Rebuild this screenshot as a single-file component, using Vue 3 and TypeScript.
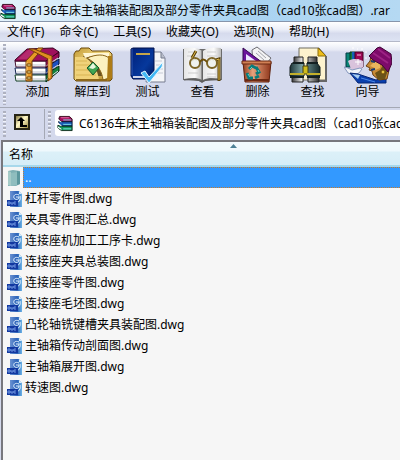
<script setup lang="ts">
import { ref } from 'vue'

interface MenuItem {
  label: string
}
interface Tool {
  id: string
  label: string
}

const archive = 'C6136车床主轴箱装配图及部分零件夹具cad图（cad10张cad图）.rar'
const address = ref<string>(archive)

const menus: MenuItem[] = [
  { label: '文件(F)' },
  { label: '命令(C)' },
  { label: '工具(S)' },
  { label: '收藏夹(O)' },
  { label: '选项(N)' },
  { label: '帮助(H)' },
]

const tools: Tool[] = [
  { id: 'add', label: '添加' },
  { id: 'extract', label: '解压到' },
  { id: 'test', label: '测试' },
  { id: 'view', label: '查看' },
  { id: 'delete', label: '删除' },
  { id: 'find', label: '查找' },
  { id: 'wizard', label: '向导' },
]

const files: string[] = [
  '杠杆零件图.dwg',
  '夹具零件图汇总.dwg',
  '连接座机加工工序卡.dwg',
  '连接座夹具总装图.dwg',
  '连接座零件图.dwg',
  '连接座毛坯图.dwg',
  '凸轮轴铣键槽夹具装配图.dwg',
  '主轴箱传动剖面图.dwg',
  '主轴箱展开图.dwg',
  '转速图.dwg',
]
</script>

<template>
  <div class="window">
    <svg class="defs" width="0" height="0" aria-hidden="true">
      <defs>
        <linearGradient id="g-folder" x1="0" y1="0" x2="1" y2="1">
          <stop offset="0" stop-color="#c39a35" />
          <stop offset=".5" stop-color="#f4dc86" />
          <stop offset="1" stop-color="#a87813" />
        </linearGradient>
        <linearGradient id="g-blue" x1="0" y1="0" x2="1" y2="1">
          <stop offset="0" stop-color="#001f78" />
          <stop offset=".6" stop-color="#06389c" />
          <stop offset="1" stop-color="#00175e" />
        </linearGradient>
        <linearGradient id="g-bin" x1="0" y1="0" x2="1" y2="0">
          <stop offset="0" stop-color="#8f3d1d" />
          <stop offset=".35" stop-color="#e8a27c" />
          <stop offset="1" stop-color="#8e351a" />
        </linearGradient>
        <linearGradient id="g-metal" x1="0" y1="0" x2="1" y2="0">
          <stop offset="0" stop-color="#3a3a3a" />
          <stop offset=".4" stop-color="#fff" />
          <stop offset="1" stop-color="#303030" />
        </linearGradient>
        <linearGradient id="g-teal" x1="0" y1="0" x2="1" y2="0">
          <stop offset="0" stop-color="#1d3538" />
          <stop offset=".4" stop-color="#7ba0a0" />
          <stop offset="1" stop-color="#152a2c" />
        </linearGradient>
        <linearGradient id="g-page" x1="0" y1="0" x2="1" y2="0">
          <stop offset="0" stop-color="#e6e6e6" />
          <stop offset=".6" stop-color="#fafafa" />
          <stop offset="1" stop-color="#bcbcbc" />
        </linearGradient>
        <linearGradient id="g-doc" x1="0" y1="0" x2="1" y2="0">
          <stop offset="0" stop-color="#6c93d2" />
          <stop offset=".6" stop-color="#2b62b8" />
          <stop offset="1" stop-color="#6db4e6" />
        </linearGradient>
        <symbol id="books" viewBox="0 0 18 18">
          <path d="M3 1h11l3 3v3H5L2 4z" fill="#a30d5c" stroke="#26000f" />
          <path d="M4 2h9l1 1H5z" fill="#e06aa5" />
          <path d="M5 7h12v5H5L2 9V6z" fill="#1a5eb8" stroke="#07162e" />
          <path d="M5 12h12v5H5l-4-3v-3z" fill="#10955a" stroke="#03200f" />
          <path d="M1 4l4 3v1L1 6zM1 8l4 3v1l-4-2zM1 12l4 3v1l-4-2z" fill="#fff" />
          <path d="M7 5h9M7 10h9M7 15h9" stroke="#7fe3ec" />
        </symbol>
      </defs>
    </svg>

    <header class="titlebar">
      <svg class="book-icon" viewBox="0 0 18 18" aria-hidden="true"><use href="#books" /></svg>
      <h1>{{ archive }}</h1>
    </header>

    <nav class="menubar">
      <button v-for="m in menus" :key="m.label" type="button">{{ m.label }}</button>
    </nav>

    <div class="toolbar">
      <span class="grip"></span>
      <button v-for="t in tools" :key="t.id" type="button" class="tool">
        <svg v-if="t.id === 'add'" viewBox="0 0 48 38" aria-hidden="true">
          <path d="M31 29L45 20V25L32 36z" fill="#14813b" stroke="#052e12" />
          <path d="M31 22L45 13V18L32 29z" fill="#1b4fc0" stroke="#05153f" />
          <path d="M31 15L45 6V11L32 22z" fill="#9c0a56" stroke="#2d0018" />
          <path d="M32 20L44 12M32 27L44 19M32 34L44 25" stroke="#dfe6f4" />
          <path d="M1 15h31v6H2z" fill="#fff" stroke="#44102e" />
          <path d="M1 22h31v6H2z" fill="#fff" stroke="#10204e" />
          <path d="M1 29h31v6H2z" fill="#fff" stroke="#113d22" />
          <path d="M3 19h28M3 26h28M3 33h28" stroke="#bfc1cd" />
          <path d="M1 14L13 3L39 2L45 6L32 15H1z" fill="#9f105b" stroke="#3b0020" />
          <path d="M4 13L14 4L24 3L13 13z" fill="#b52a6e" />
          <path d="M12 15L24 2h5L18 15v20h-6z" fill="#e79a27" stroke="#76400a" />
          <path d="M15 3h5L38 10v22l-4 3V13z" fill="#e08e20" stroke="#76400a" />
          <path d="M13 16v18M35 13v19" stroke="#ffd176" />
          <path d="M13 18h4v2h-4zM13 25h4v2h-4zM13 31h4v2h-4z" fill="#fff2a0" stroke="#70430b" />
        </svg>
        <svg v-else-if="t.id === 'extract'" viewBox="0 0 48 38" aria-hidden="true">
          <path d="M5 8l2-3h3l2-3h8l3 3h17l3 3v25l-2 2H7l-2-2z" fill="url(#g-folder)" stroke="#6c4b0b" />
          <path d="M14 10h25v20H27z" fill="#6b5120" />
          <path d="M14 7h26v5l-9-3-8 1-7 2z" fill="#fff6d4" />
          <path d="M6 11h9c7 3 14 13 15 23H8l-2-1z" fill="#f0d27a" />
          <path d="M7 15h11M7 19h15M7 24h18M7 29h20" stroke="#d8b452" />
          <path d="M18 12c10-4 17-4 22 0v20l-6 2c-1-10-7-17-16-22z" fill="#fcf1bf" stroke="#8a651b" />
          <path d="M39 10h4v22l-5 3z" fill="#ae7c17" />
          <path d="M24 16l6 6-6 7-6-7z" fill="#3fa552" stroke="#17572a" />
          <path d="M24 17l3 4-3 2-4-1z" fill="#e9f7df" />
          <path d="M7 34h31" stroke="#8d6719" stroke-width="2" />
        </svg>
        <svg v-else-if="t.id === 'test'" viewBox="0 0 48 38" aria-hidden="true">
          <path d="M26 6h11l4 6v24H22z" fill="#f4f5f8" stroke="#777d8f" />
          <path d="M37 6v6h4" fill="#b9becb" stroke="#777d8f" />
          <path d="M31 15h7M32 19h7M32 23h7M32 27h7" stroke="#c6cad5" />
          <path d="M7 3l2-1h21v28l-3 3H9l-2-3z" fill="url(#g-blue)" stroke="#00104a" />
          <path d="M9 31h19l2-2" fill="none" stroke="#cdd6ed" stroke-width="2" />
          <path d="M12 8h14" stroke="#c4a54a" stroke-width="2" />
          <path d="M8 3v26" stroke="#3159b3" />
          <path d="M17 27l4-2 4 6L39 16l-1 5L25 37z" fill="#44b8f4" stroke="#e8f8ff" />
        </svg>
        <svg v-else-if="t.id === 'view'" viewBox="0 0 48 38" aria-hidden="true">
          <path d="M4 3h39v31l-17 1-3 2-3-2-16-1z" fill="#6c6c6c" />
          <path d="M5 2c6-1 14-1 18 3v29c-5-3-12-2-18-1z" fill="url(#g-page)" />
          <path d="M42 2c-6-1-14-1-18 3v29c5-3 12-2 18-1z" fill="url(#g-page)" />
          <path d="M23 5v31M5 34c7-1 13-1 18 2c5-3 11-3 18-2" fill="none" stroke="#5c5c5c" />
          <path d="M9 6h9M8 10h11M9 27h10M28 6h9M28 10h10M28 28h9M28 31h9" stroke="#ccc" />
          <path d="M13 12l4-7M37 14l3-1v22" fill="none" stroke="#574008" stroke-width="3" />
          <path d="M13 12l4-7M37 14l3-1v21" fill="none" stroke="#dfb94b" />
          <circle cx="16" cy="17" r="5" fill="#eff1ed" stroke="#7c6425" stroke-width="2" />
          <circle cx="33" cy="17" r="5" fill="#eff1ed" stroke="#7c6425" stroke-width="2" />
          <path d="M21 16q3-5 7 0" fill="none" stroke="#6c4e0a" stroke-width="2" />
          <path d="M13 15q2-3 5-1M30 15q2-3 5-1" fill="none" stroke="#d8d6c2" />
        </svg>
        <svg v-else-if="t.id === 'delete'" viewBox="0 0 48 38" aria-hidden="true">
          <path d="M18 4l5-3 14 11-4 5H19z" fill="#f3f3f4" stroke="#6d6d73" />
          <path d="M24 5l8 7M26 3l8 7M22 7l8 7" stroke="#a4a4ac" />
          <path d="M9 2l20 15H9z" fill="#6b159c" stroke="#35094e" />
          <path d="M12 8l10 7H12z" fill="#eee8ff" />
          <path d="M9 16h28l-2 20H11z" fill="url(#g-bin)" stroke="#5e210d" />
          <path d="M8 15h29v3H8z" fill="#d18054" stroke="#6b2910" />
          <path d="M11 34h24" stroke="#6c2812" stroke-width="2" />
          <path d="M15 23l3-3 4 2M22 21l3 5-3 2M19 32h-4l-2-5M21 32l4-2" fill="none" stroke="#087b7b" stroke-width="3" />
          <path d="M16 23l2-2M24 24l1 2M14 28l2 3" stroke="#65d4c5" />
        </svg>
        <svg v-else-if="t.id === 'find'" viewBox="0 0 48 38" aria-hidden="true">
          <path d="M10 2h20l7 8v24H10z" fill="#fdf3ce" stroke="#716e62" />
          <path d="M29 2v8h8z" fill="#eebd19" stroke="#8c6e0b" />
          <path d="M37 10v25H22" fill="none" stroke="#676767" stroke-width="2" />
          <path d="M5 11h9v7H5zM19 11h9v7h-9z" fill="url(#g-metal)" stroke="#222" />
          <path d="M3 30h11v6H3zM19 30h11v6H19z" fill="url(#g-metal)" stroke="#222" />
          <path d="M3 17h12v13H1V21zM18 17h10l3 4v9H18z" fill="url(#g-teal)" stroke="#101a1b" />
          <path d="M14 20h5v8h-5z" fill="#d0bd1c" stroke="#48410a" />
          <path d="M1 28h14M18 28h13" stroke="#c3b02b" stroke-width="2" />
          <path d="M1 31h14M18 31h13M4 17h11M18 17h11" stroke="#142021" stroke-width="2" />
        </svg>
        <svg v-else viewBox="0 0 48 38" aria-hidden="true">
          <path d="M2 7h5v14H2z" fill="#078575" stroke="#033b44" />
          <path d="M6 6h5v14H6z" fill="#157a3c" stroke="#06361e" />
          <path d="M8 6h3v14H8z" fill="#1263b6" />
          <path d="M11 6h8v15h-8z" fill="#9b0954" stroke="#42001e" />
          <path d="M13 9h4" stroke="#f5c0dc" />
          <path d="M4 15c5-3 11-2 15 0v6l-4 2H7z" fill="#d9c3dc" />
          <path d="M14 13v6M11 16h6" stroke="#fff" />
          <path d="M0 21l4 1 4 2 8-2 2 1-3 4-6 2-5-2z" fill="#f0f3f8" stroke="#8597bd" />
          <path d="M6 27l8 1 9 3 9 3 10-3v6H14z" fill="#0a3fae" stroke="#062672" />
          <path d="M8 28l8 1-2 4z" fill="#a8cdf0" />
          <path d="M17 32l14 4" stroke="#4d8be8" />
          <path d="M27 10l-1 5-4 5 4 2-1 2 3 1 1 4 6 5 8-1 2-9-3-8z" fill="#c98b35" stroke="#6b3f10" />
          <path d="M28 13l3 2-5 5 5 2-2 3 7-3V14z" fill="#eab65e" />
          <path d="M27 15l4 1M27 24l4-1" stroke="#1b3b70" stroke-width="2" />
          <path d="M31 27l5-3 5-8 3 8-3 9-7 1z" fill="#6b5318" />
          <path d="M25 10l8-8 3-1 11 7 1 9-4 9-6-7-9-5z" fill="#7d0b69" stroke="#3f0434" />
          <path d="M29 7l15 10M34 3l12 9" stroke="#9c2384" stroke-width="2" />
          <circle cx="39" cy="26" r="2" fill="#e7c33f" stroke="#6e4809" />
          <path d="M17 3h2M21 6h2M8 2h2M21 12h2M13 3h1" stroke="#fff" />
        </svg>
        <span>{{ t.label }}</span>
      </button>
    </div>

    <div class="addressbar">
      <div class="up-band">
        <span class="grip"></span>
        <button type="button" class="up" aria-label="上一级">
          <svg viewBox="0 0 16 16" aria-hidden="true">
            <defs>
              <linearGradient id="g-up" x1="0" y1="0" x2="1" y2="1">
                <stop offset="0" stop-color="#6f6228" />
                <stop offset=".45" stop-color="#fff8c8" />
                <stop offset="1" stop-color="#8d7a2d" />
              </linearGradient>
            </defs>
            <path d="M1 1h14v14H1z" fill="url(#g-up)" stroke="#262416" stroke-width="2" />
            <path d="M7 3l4 4H9v4h4v2H6V7H3z" fill="#000" />
          </svg>
        </button>
      </div>
      <span class="grip"></span>
      <label class="address">
        <svg class="book-icon" viewBox="0 0 18 18" aria-hidden="true"><use href="#books" /></svg>
        <input v-model="address" type="text" aria-label="地址" />
      </label>
    </div>

    <main class="files">
      <table>
        <thead>
          <tr>
            <th scope="col">
              <div class="heading">
                <span>名称</span>
                <svg viewBox="0 0 7 4" aria-hidden="true"><path d="M0 4L3.500 0L7 4z" fill="#4d8196" /></svg>
              </div>
            </th>
          </tr>
        </thead>
        <tbody>
          <tr class="parent">
            <td>
              <div class="entry">
                <svg viewBox="0 0 16 18" aria-hidden="true">
                  <path d="M1 2l5-1 7 1v13l-4 2H1z" fill="#7eafb3" />
                  <path d="M1 2l3 1v14l-3-1z" fill="#a6cbc8" />
                  <path d="M4 4l6-1v13l-6 1z" fill="#8fbdbe" />
                  <path d="M10 2l3 1v12l-3 1z" fill="#5c979d" />
                </svg>
                <span class="name">..</span>
              </div>
            </td>
          </tr>
          <tr v-for="f in files" :key="f">
            <td>
              <div class="entry">
                <svg viewBox="0 0 16 18" aria-hidden="true">
                  <path d="M3 1h9l3 3v13H3z" fill="url(#g-doc)" />
                  <path d="M12 1v3h3z" fill="#d8ecfa" />
                  <path d="M12 5C8 3 6 6 7 8s5 2 5-1H9M13 6c1 4-1 7-5 7" fill="none" stroke="#e3f2ff" />
                  <path d="M0 10h11v6H0z" fill="#1238a0" />
                  <path d="M1 12h2v2H1zM4 12v2h2v-2M9 12H7v2h2" fill="none" stroke="#6f94e0" />
                </svg>
                <span class="name">{{ f }}</span>
              </div>
            </td>
          </tr>
        </tbody>
      </table>
    </main>
  </div>
</template>

<style>
body {
  margin: 0;
}
</style>

<style scoped>
.window {
  display: flex;
  flex-direction: column;
  min-height: 100vh;
  overflow: hidden;
  background: #d4d9ec;
  color: #000;
  font: 12px/18px "Noto Sans", "Noto Sans CJK SC", sans-serif;
}
.defs {
  position: absolute;
}
button {
  margin: 0;
  padding: 0;
  border: 0;
  background: none;
  color: inherit;
  font: inherit;
  white-space: nowrap;
}
svg {
  display: block;
  flex: none;
}
.titlebar {
  display: flex;
  align-items: center;
  gap: 6px;
  height: 22px;
  padding-top: 1px;
  background: linear-gradient(90deg, #e3f2fb 0, #c9e3f5 35%, #a9d3f1 60%, #b5d9f3 100%);
  border-bottom: 1px solid #8795ab;
  box-sizing: border-box;
}
.titlebar h1 {
  margin: 0;
  font: inherit;
  white-space: nowrap;
}
.book-icon {
  width: 16px;
  height: 17px;
}
.menubar {
  display: flex;
  align-items: center;
  gap: 15px;
  height: 20px;
  padding-left: 7px;
  box-sizing: border-box;
  background: linear-gradient(#fff 0, #eceff8 40%, #d6dbed 60%, #dde3f3 100%);
  border-bottom: 1px solid #b4b8c8;
}
.toolbar {
  display: flex;
  height: 66px;
  box-sizing: border-box;
  background: linear-gradient(#fff 0, #e7eaf5 8px, #d4d9ec 10px);
  border-bottom: 1px solid #a4a8b4;
}
.grip {
  flex: none;
  width: 3px;
  margin: 2px 4px 2px 3px;
  background: repeating-linear-gradient(#aeb1bf 0 2px, #f2f4fb 2px 3px, #d4d9ec 3px 4px);
}
.tool {
  display: flex;
  flex-direction: column;
  align-items: center;
  justify-content: flex-start;
  width: 55px;
  padding-top: 4px;
  flex: none;
}
.tool svg {
  width: 48px;
  height: 38px;
}
.tool span {
  margin-top: -1px;
}
.addressbar {
  display: flex;
  height: 32px;
  padding: 1px 0;
  box-sizing: border-box;
}
.up-band {
  display: flex;
  align-items: center;
  flex: none;
  width: 44px;
  border-right: 1px solid #a4a8b4;
}
.up-band .grip {
  align-self: stretch;
}
.up-band .up {
  margin: 0 0 4px 4px;
}
.up svg {
  width: 16px;
  height: 16px;
}
.address {
  display: flex;
  flex: 1;
  align-items: center;
  gap: 6px;
  min-width: 0;
  margin: 1px 0 3px;
  padding-left: 2px;
  border-radius: 3px 0 0 3px;
  background: #fff;
}
.address input {
  flex: 1;
  min-width: 0;
  height: 20px;
  padding: 0;
  border: 0;
  outline: 0;
  background: none;
  color: inherit;
  font: inherit;
}
.files {
  flex: 1;
  margin-left: 1px;
  border: 2px solid #77777d;
  border-width: 2px 0 0 2px;
  background: #f6f6f6;
}
table {
  width: 100%;
  border-collapse: collapse;
}
th,
td {
  padding: 0;
  text-align: left;
  font-weight: normal;
}
.heading {
  display: grid;
  grid-template-columns: 230px auto;
  align-items: start;
  height: 25px;
  box-sizing: border-box;
  padding: 4px 0 0 6px;
  background: linear-gradient(#f2fafd 0, #eef8fc 9px, #dcf0f8 10px, #d6edf7 100%);
  border-bottom: 2px solid #a8d8eb;
}
.heading svg {
  width: 7px;
  height: 4px;
  margin: -2px 0 0 -9px;
}
.entry {
  display: flex;
  align-items: center;
  height: 21px;
  padding-left: 4px;
}
.entry svg {
  width: 16px;
  height: 18px;
}
.name {
  flex: 1;
  padding: 1px 0 0 2px;
  line-height: 18px;
}
.parent .name {
  border: 1px dotted #c87a2c;
  border-right: 0;
  padding: 1px 0 0 1px;
  background: #3399ff;
  color: #fff;
}
</style>
